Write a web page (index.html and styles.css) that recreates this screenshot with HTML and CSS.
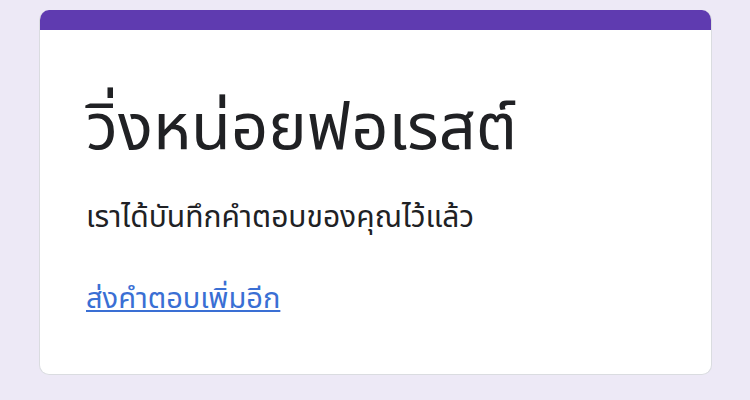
FILE: index.html
```html
<!DOCTYPE html>
<html lang="th">
<head>
<meta charset="utf-8">
<link rel="stylesheet" href="styles.css">
</head>
<body>
<div class="page">
  <div class="card">
    <div class="accent"></div>
    <div class="body">
      <h1 class="title">วิ่งหน่อยฟอเรสต์</h1>
      <p class="msg">เราได้บันทึกคำตอบของคุณไว้แล้ว</p>
      <div class="actions"><a class="link" href="#">ส่งคำตอบเพิ่มอีก</a></div>
    </div>
  </div>
</div>
</body>
</html>
```
FILE: styles.css
```css
html, body {
  margin: 0;
  padding: 0;
  background: #ede9f6;
  font-family: "Noto Sans Thai", "Noto Sans", "DejaVu Sans", sans-serif;
}
.page {
  padding: 10px 38px 0 39px;
}
.card {
  background: #fff;
  border-radius: 10px;
  overflow: hidden;
  border: 1px solid #dadce0;
  border-top: none;
}
.accent {
  height: 20px;
  background: #5f3bb0;
}
.body {
  padding: 57px 46px 56px 46px;
}
.title {
  margin: 0;
  font-size: 65px;
  font-weight: 400;
  color: #202124;
  line-height: 1.3;
}
.msg {
  margin: 27px 0 0 0;
  font-size: 30px;
  line-height: 1.3;
  color: #202124;
}
.actions {
  margin-top: 43px;
  font-size: 29px;
  line-height: 1.3;
}
.link {
  color: #3a6fd4;
  text-decoration: underline;
}
```
